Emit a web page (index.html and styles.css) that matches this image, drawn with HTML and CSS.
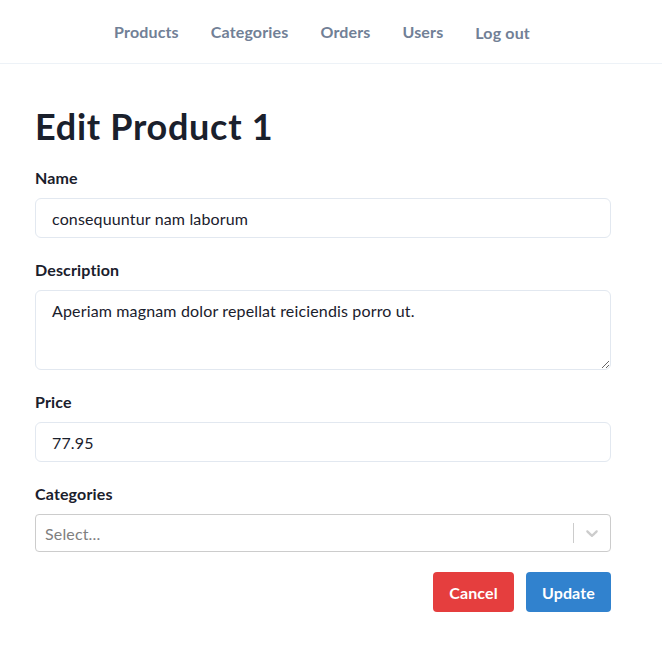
FILE: index.html
```html
<!DOCTYPE html>
<html>
<head>
<meta charset="utf-8">
<link rel="stylesheet" href="styles.css">
</head>
<body>
<header class="header">
  <nav class="nav">
    <a class="nav-link" href="#">Products</a>
    <a class="nav-link" href="#">Categories</a>
    <a class="nav-link" href="#">Orders</a>
    <a class="nav-link" href="#">Users</a>
    <button class="nav-link nav-button" type="button">Log out</button>
  </nav>
</header>
<main class="main">
  <h1 class="title">Edit Product 1</h1>
  <form class="form">
    <div class="field">
      <label class="label">Name</label>
      <input class="input" type="text" value="consequuntur nam laborum">
    </div>
    <div class="field">
      <label class="label">Description</label>
      <textarea class="input textarea">Aperiam magnam dolor repellat reiciendis porro ut.</textarea>
    </div>
    <div class="field">
      <label class="label">Price</label>
      <input class="input" type="text" value="77.95">
    </div>
    <div class="field field-last">
      <label class="label">Categories</label>
      <div class="select">
        <div class="select-value">Select...</div>
        <div class="select-indicators">
          <span class="select-sep"></span>
          <span class="select-arrow">
            <svg width="20" height="20" viewBox="0 0 20 20"><path fill="currentColor" d="M4.516 7.548c0.436-0.446 1.043-0.481 1.576 0l3.908 3.747 3.908-3.747c0.533-0.481 1.141-0.446 1.574 0 0.436 0.445 0.408 1.197 0 1.615-0.406 0.418-4.695 4.502-4.695 4.502-0.217 0.223-0.502 0.335-0.787 0.335s-0.57-0.112-0.789-0.335c0 0-4.287-4.084-4.695-4.502s-0.436-1.170 0-1.615z"/></svg>
          </span>
        </div>
      </div>
    </div>
    <div class="actions">
      <button class="btn btn-red" type="button">Cancel</button>
      <button class="btn btn-blue" type="button">Update</button>
    </div>
  </form>
</main>
</body>
</html>
```
FILE: styles.css
```css
* { box-sizing: border-box; }
html, body { margin: 0; padding: 0; background: #fff; }
body {
  font-family: "Lato", "Noto Sans", sans-serif;
  color: #1a202c;
  font-size: 16px;
  letter-spacing: 0.15px;
}
.header {
  height: 64px;
  border-bottom: 1px solid #edf2f7;
  display: flex;
  align-items: center;
  justify-content: center;
  padding-right: 18px;
}
.nav {
  display: flex;
  align-items: center;
  gap: 32px;
}
.nav-link {
  font-family: inherit;
  font-size: 16px;
  font-weight: 700;
  letter-spacing: 0.15px;
  color: #718096;
  text-decoration: none;
  padding: 0;
  line-height: 24px;
}
.nav-button {
  background: none;
  border: 0;
  margin-top: 3px;
}
.main {
  padding: 0 35px;
  width: 646px;
}
.title {
  font-size: 36px;
  font-weight: 700;
  line-height: 40px;
  letter-spacing: 0.7px;
  margin: 42px 0 20px;
}
.form { display: flex; flex-direction: column; }
.field { display: flex; flex-direction: column; margin-bottom: 20px; }
.field-last { margin-bottom: 20px; }
.label {
  font-size: 16px;
  font-weight: 700;
  line-height: 24px;
  margin-bottom: 8px;
}
.input {
  font-family: inherit;
  font-size: 16px;
  letter-spacing: 0.15px;
  color: #1a202c;
  height: 40px;
  border: 1px solid #e2e8f0;
  border-radius: 6px;
  padding: 8px 16px;
  width: 100%;
  outline: none;
  margin: 0;
}
.textarea {
  display: block;
  height: 80px;
  resize: vertical;
  line-height: 24px;
}
.select {
  height: 38px;
  border: 1px solid #cccccc;
  border-radius: 4px;
  display: flex;
  align-items: center;
}
.select-value {
  flex: 1;
  padding: 2px 8px 2px 9px;
  color: #808080;
  font-size: 16px;
}
.select-indicators { display: flex; align-items: center; align-self: stretch; }
.select-sep { width: 1px; height: 20px; background: #cccccc; align-self: center; }
.select-arrow { color: #cccccc; padding: 8px; display: flex; }
.actions {
  display: flex;
  justify-content: flex-end;
  gap: 12px;
}
.btn {
  font-family: inherit;
  font-size: 16px;
  font-weight: 700;
  letter-spacing: 0.15px;
  color: #fff;
  border: 0;
  border-radius: 4px;
  height: 40px;
  padding: 0 16px;
  margin: 0;
}
.btn-red { background: #e53e3e; }
.btn-blue { background: #3182ce; }
```
